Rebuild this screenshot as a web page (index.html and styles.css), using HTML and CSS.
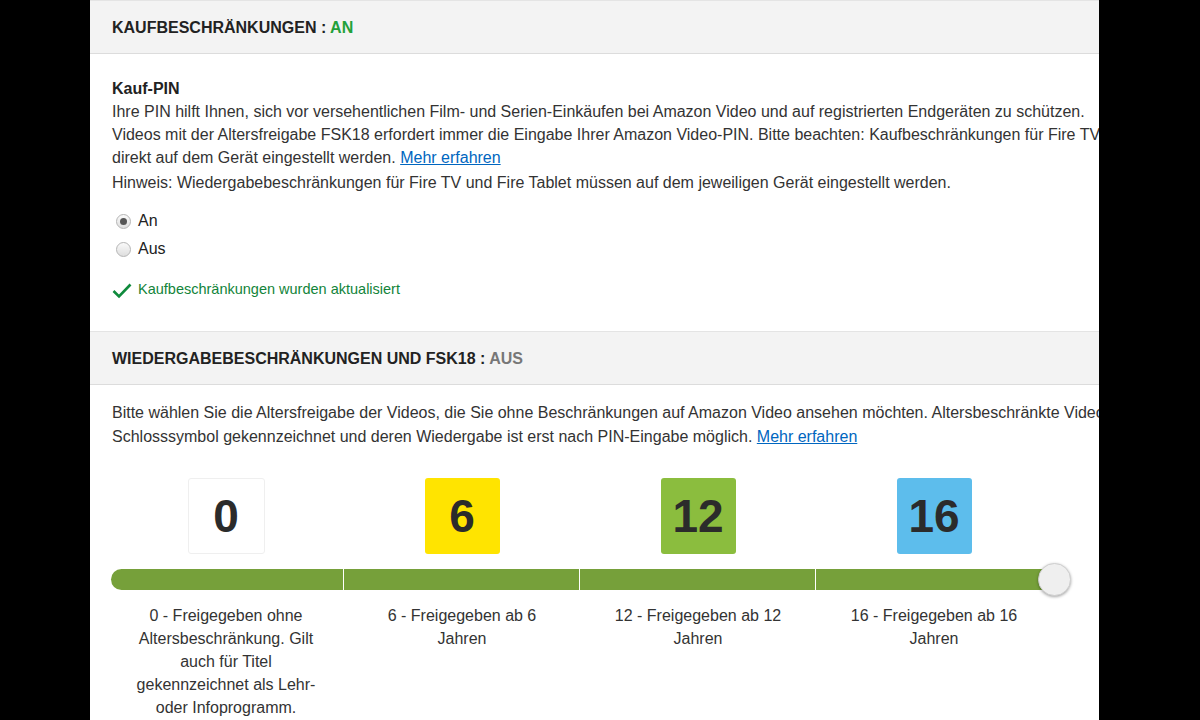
FILE: index.html
```html
<!DOCTYPE html>
<html lang="de">

<head>
    <meta charset="UTF-8">
    <meta name="viewport" content="width=device-width, initial-scale=1.0">
    <title>Kindersicherung</title>
    <link rel="stylesheet" href="styles.css">
</head>

<body>
    <div class="page">
        <!-- Kaufbeschränkungen -->
        <div class="section">
            <h2 class="section-head">Kaufbeschränkungen : <span class="state on">An</span></h2>
            <div class="section-body first">
                <h3 class="title">Kauf-PIN</h3>
                <p class="text">Ihre PIN hilft Ihnen, sich vor versehentlichen Film- und Serien-Einkäufen bei Amazon Video und auf registrierten Endgeräten zu schützen.<br>
                    Videos mit der Altersfreigabe FSK18 erfordert immer die Eingabe Ihrer Amazon Video-PIN. Bitte beachten: Kaufbeschränkungen für Fire TV und Fire Tablet müssen<br>
                    direkt auf dem Gerät eingestellt werden. <a href="#">Mehr erfahren</a></p>
                <p class="text note">Hinweis: Wiedergabebeschränkungen für Fire TV und Fire Tablet müssen auf dem jeweiligen Gerät eingestellt werden.</p>

                <div class="radios">
                    <label class="radio"><span class="dot checked"></span>An</label>
                    <label class="radio"><span class="dot"></span>Aus</label>
                </div>

                <div class="success">
                    <svg width="20" height="16" viewBox="0 0 20 16">
                        <polyline points="1.5,8 7,13.5 18.5,1.5" fill="none" stroke="#0f8a3c" stroke-width="2.6" />
                    </svg>
                    <span>Kaufbeschränkungen wurden aktualisiert</span>
                </div>
            </div>
        </div>

        <!-- Wiedergabebeschränkungen -->
        <div class="section">
            <h2 class="section-head">Wiedergabebeschränkungen und FSK18 : <span class="state off">Aus</span></h2>
            <div class="section-body second">
                <p class="text wide">Bitte wählen Sie die Altersfreigabe der Videos, die Sie ohne Beschränkungen auf Amazon Video ansehen möchten. Altersbeschränkte Videos werden mit einem<br>
                    Schlosssymbol gekennzeichnet und deren Wiedergabe ist erst nach PIN-Eingabe möglich. <a href="#">Mehr erfahren</a></p>

                <div class="ratings">
                    <div class="levels">
                        <div class="level white">0</div>
                        <div class="level yellow">6</div>
                        <div class="level green">12</div>
                        <div class="level blue">16</div>
                    </div>
                    <div class="track">
                        <div class="seg"></div>
                        <div class="seg"></div>
                        <div class="seg"></div>
                        <div class="seg"></div>
                        <div class="thumb"></div>
                    </div>
                    <div class="labels">
                        <p>0 - Freigegeben ohne Altersbeschränkung. Gilt auch für Titel gekennzeichnet als Lehr- oder Infoprogramm.</p>
                        <p>6 - Freigegeben ab 6 Jahren</p>
                        <p>12 - Freigegeben ab 12 Jahren</p>
                        <p>16 - Freigegeben ab 16 Jahren</p>
                    </div>
                </div>
            </div>
        </div>
    </div>
</body>

</html>
```

FILE: styles.css
```css
* {
    margin: 0;
    padding: 0;
    box-sizing: border-box;
}

body {
    background-color: #000;
    font-family: "Liberation Sans", Arial, sans-serif;
    color: #333;
    font-size: 16px;
    overflow: hidden;
}

.page {
    width: 1009px;
    height: 720px;
    margin-left: 90px;
    background-color: #fff;
    overflow: hidden;
}

/* Kopfzeilen */
.section-head {
    height: 54px;
    padding: 1px 22px 0;
    line-height: 52px;
    background-color: #f3f3f3;
    border-top: 1px solid #e4e4e4;
    border-bottom: 1px solid #dcdcdc;
    font-size: 16px;
    font-weight: bold;
    color: #222;
    text-transform: uppercase;
    white-space: nowrap;
}

.state.on {
    color: #23a03a;
}

.state.off {
    color: #777;
}

.section-body {
    padding: 0 22px;
}

.section-body.first {
    padding-top: 23px;
    padding-bottom: 32px;
}

.section-body.second {
    padding-top: 16px;
}

.title {
    font-size: 16px;
    line-height: 23px;
    font-weight: bold;
    color: #222;
}

.text {
    line-height: 23px;
    white-space: nowrap;
}

.text.note {
    margin-top: 2px;
}

.text.wide {
    line-height: 24px;
}

a {
    color: #0066c0;
    text-decoration: underline;
}

/* Radios */
.radios {
    margin-top: 13px;
    margin-left: 4px;
}

.radio {
    display: flex;
    align-items: center;
    height: 28px;
    font-size: 16px;
    color: #222;
}

.dot {
    width: 15px;
    height: 15px;
    margin-right: 7px;
    border: 1px solid #b5b5b5;
    border-radius: 50%;
    background: linear-gradient(#fafafa, #dedede);
    display: flex;
    align-items: center;
    justify-content: center;
}

.dot.checked::after {
    content: "";
    width: 7px;
    height: 7px;
    border-radius: 50%;
    background-color: #555;
}

.success {
    display: flex;
    align-items: center;
    height: 20px;
    margin-top: 16px;
    font-size: 14.5px;
    color: #12843a;
}

.success svg {
    margin-right: 6px;
    margin-top: 4px;
}

/* Altersfreigaben */
.ratings {
    margin-top: 29px;
    margin-left: -4px;
}

.levels,
.labels {
    display: grid;
    grid-template-columns: repeat(4, 236px);
    justify-items: center;
}

.level {
    width: 75px;
    height: 76px;
    border-radius: 3px;
    font-size: 46px;
    font-weight: bold;
    line-height: 76px;
    text-align: center;
    color: #2b2b2b;
}

.level.white {
    width: 77px;
    border: 1px solid #efefef;
    line-height: 74px;
}

.level.yellow {
    background-color: #ffe400;
}

.level.green {
    background-color: #8bbd3e;
}

.level.blue {
    background-color: #5dbdec;
}

.track {
    position: relative;
    display: flex;
    width: 941px;
    height: 21px;
    margin: 15px 0 0 3px;
    border-radius: 11px 0 0 11px;
    background-color: #76a03a;
}

.seg {
    width: 236px;
    border-right: 1px solid #fff;
}

.seg:first-child {
    width: 233px;
}

.seg:last-of-type {
    border-right: 0;
}

.thumb {
    position: absolute;
    right: -19px;
    top: -6px;
    width: 33px;
    height: 33px;
    border-radius: 50%;
    background-color: #efefef;
    border: 1px solid #cfcfcf;
    box-shadow: 0 1px 3px rgba(0, 0, 0, .35);
}

.labels {
    margin-top: 14px;
}

.labels p {
    width: 192px;
    line-height: 23px;
    text-align: center;
}
```
